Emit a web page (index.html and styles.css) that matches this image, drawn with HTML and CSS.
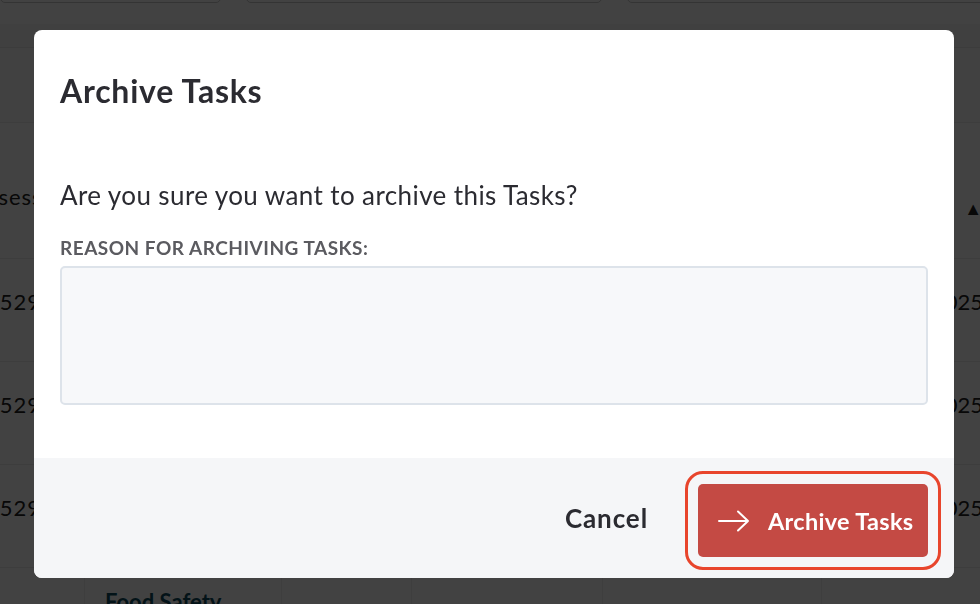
FILE: index.html
```
<!DOCTYPE html>
<html lang="en">
<head>
<meta charset="utf-8">
<title>Archive Tasks</title>
<link rel="stylesheet" href="styles.css">
</head>
<body>
<div class="page">
  <div class="filters">
    <div class="field f1"></div>
    <div class="field f2"></div>
    <div class="field f3"></div>
  </div>
  <div class="band"></div>
  <div class="subbar"></div>
  <div class="table">
    <div class="row head"><span class="c1">Assess</span><span class="cr">▲</span></div>
    <div class="row"><span class="c1">15292</span><span class="cr">2025</span></div>
    <div class="row"><span class="c1">15292</span><span class="cr">2025</span></div>
    <div class="row"><span class="c1">15292</span><span class="cr">2025</span></div>
    <div class="row last">
      <span class="cell w85"></span><span class="cell w197"><b class="food">Food Safety</b></span><span class="cell w130"></span><span class="cell w191"></span><span class="cell w219"></span>
    </div>
  </div>
  <div class="overlay"></div>
</div>

<div class="modal" role="dialog" aria-labelledby="mt">
  <div class="modal-body">
    <h2 class="title" id="mt">Archive Tasks</h2>
    <p class="question">Are you sure you want to archive this Tasks?</p>
    <label class="label" for="reason">REASON FOR ARCHIVING TASKS:</label>
    <textarea class="reason" id="reason"></textarea>
  </div>
  <div class="modal-footer">
    <button class="btn-cancel" type="button">Cancel</button>
    <button class="btn-archive" type="button">
      <svg class="arrow" width="32" height="22" viewBox="0 0 32 22" fill="none" stroke="#fff" stroke-width="2" stroke-linecap="round" stroke-linejoin="round"><path d="M1 11H30M20 1.5L30 11L20 20.5"/></svg>
      <span>Archive Tasks</span>
    </button>
  </div>
</div>
</body>
</html>
```
FILE: styles.css
```
* { box-sizing: border-box; }
html, body { margin: 0; padding: 0; }
body {
  width: 980px;
  height: 604px;
  overflow: hidden;
  font-family: Lato, "Open Sans", Arial, sans-serif;
  background: #fff;
}
.page {
  position: relative;
  width: 980px;
  height: 604px;
  overflow: hidden;
  background: #fff;
}
.filters {
  display: flex;
  gap: 25px;
  margin-top: -20px;
  height: 44px;
  padding-bottom: 20px;
}
.field {
  height: 23px;
  border: 1px solid #c9c9c9;
  border-radius: 5px;
}
.f1 { width: 221px; }
.f2 { width: 356px; }
.f3 { flex: 1; margin-right: -10px; }
.band {
  height: 24px;
  background: #f6f6f6;
  border-bottom: 1px solid #e6e6e6;
}
.subbar {
  height: 75px;
  border-bottom: 1px solid #ebebeb;
  background: #fafafa;
}
.row {
  height: 103px;
  border-bottom: 1px solid #ececec;
  display: flex;
  align-items: center;
  justify-content: space-between;
  font-size: 22px;
  color: #222;
  padding-bottom: 18px;
}
.row.head { height: 136px; padding-bottom: 0; padding-top: 12px; }
.c1 { margin-left: -14px; letter-spacing: 1px; }
.cr { margin-right: -3px; }
.row.head .c1 { margin-left: -28px; }
.row.head .cr { margin-right: -2px; font-size: 18px; padding-top: 24px; }
.row.last { align-items: flex-start; justify-content: flex-start; height: 60px; padding-bottom: 0; }
.cell { height: 60px; border-right: 1px solid #efefef; }
.w85 { width: 85px; }
.w197 { width: 197px; padding: 20px 0 0 20px; }
.w130 { width: 130px; }
.w191 { width: 191px; }
.w219 { width: 219px; }
.food { color: #0d4b5c; font-size: 22px; font-weight: 700; }
.overlay {
  position: absolute;
  inset: 0;
  background: rgba(0, 0, 0, 0.74);
}

.modal {
  position: fixed;
  left: 34px;
  top: 30px;
  width: 920px;
  height: 548px;
  background: #fff;
  border-radius: 8px;
  overflow: hidden;
  display: flex;
  flex-direction: column;
}
.modal-body {
  flex: 1;
  padding: 0 26px;
}
.title {
  margin: 42px 0 0;
  font-size: 32px;
  line-height: 38px;
  letter-spacing: 0.75px;
  font-weight: 700;
  color: #2b2b31;
}
.question {
  margin: 69px 0 0;
  font-size: 26px;
  line-height: 32px;
  letter-spacing: 0.4px;
  color: #2b2b31;
}
.label {
  display: block;
  margin-top: 25px;
  font-size: 19px;
  line-height: 24px;
  font-weight: 700;
  letter-spacing: 0.5px;
  color: #5b5b60;
}
.reason {
  display: block;
  margin-top: 6px;
  width: 100%;
  height: 139px;
  background: #f7f8fa;
  border: 2px solid #dde3ea;
  border-radius: 5px;
  resize: none;
  font-family: inherit;
}
.modal-footer {
  height: 120px;
  background: #f5f6f8;
  display: flex;
  align-items: center;
  justify-content: flex-end;
  padding: 0 26px 0 0;
  gap: 50px;
}
.btn-cancel {
  background: none;
  border: 0;
  padding: 0;
  font-family: inherit;
  font-size: 26px;
  letter-spacing: 0.9px;
  font-weight: 700;
  color: #2b2b31;
}
.btn-archive {
  width: 230px;
  height: 73px;
  background: #c44a44;
  border: 0;
  border-radius: 5px;
  outline: 3px solid #e8452c;
  outline-offset: 10px;
  color: #fff;
  font-family: inherit;
  font-size: 23.5px;
  letter-spacing: 0.3px;
  font-weight: 700;
  display: flex;
  align-items: center;
  padding: 0 0 0 20px;
  gap: 18px;
  margin-top: 5px;
}
.arrow { display: block; }
```
